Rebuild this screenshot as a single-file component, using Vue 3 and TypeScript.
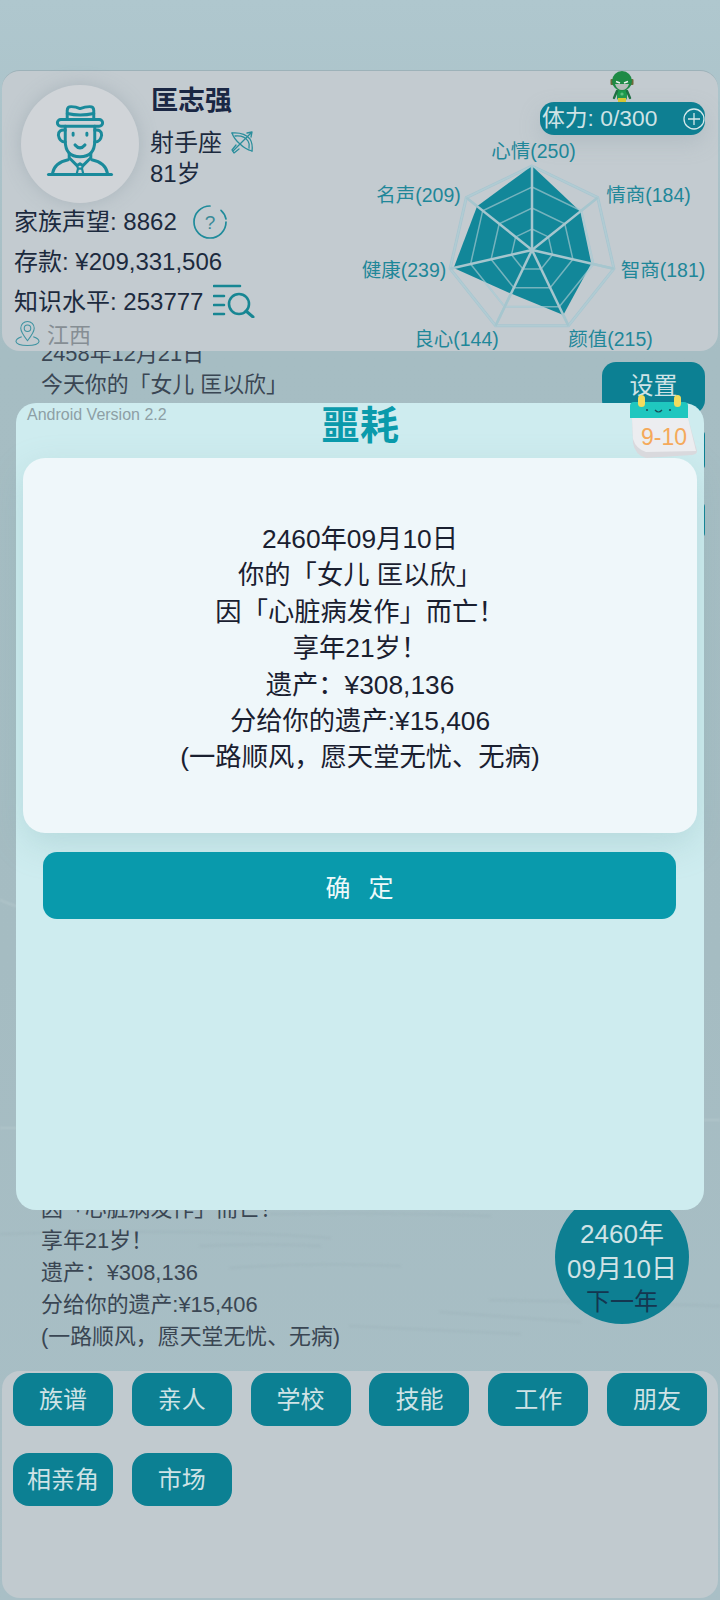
<script setup lang="ts">
import { computed } from 'vue'

const cx = 184
const cy = 179
const maxR = 84
const maxV = 250

interface Stat { name: string; value: number; x: number; y: number }

const stats: Stat[] = [
  { name: '心情', value: 250, x: 185.5, y: 79.5 },
  { name: '情商', value: 184, x: 300.5, y: 124 },
  { name: '智商', value: 181, x: 315, y: 199 },
  { name: '颜值', value: 215, x: 262.5, y: 268 },
  { name: '良心', value: 144, x: 108.5, y: 268 },
  { name: '健康', value: 239, x: 56, y: 199 },
  { name: '名声', value: 209, x: 70.5, y: 124 }
]

function pt(i: number, r: number): [number, number] {
  const a = (i * 2 * Math.PI) / stats.length
  return [cx + r * Math.sin(a), cy - r * Math.cos(a)]
}
function ring(r: number): string {
  return stats.map((_, i) => pt(i, r).map(n => n.toFixed(1)).join(',')).join(' ')
}
const rings = [84, 63, 42, 21].map(ring)
const axes = computed(() => stats.map((_, i) => pt(i, maxR)))
const dataPoints = computed(() =>
  stats.map((s, i) => pt(i, (s.value / maxV) * maxR).map(n => n.toFixed(1)).join(',')).join(' ')
)

const modalLines = [
  '2460年09月10日',
  '你的「女儿 匡以欣」',
  '因「心脏病发作」而亡\uFF01',
  '享年21岁\uFF01',
  '遗产\uFF1A¥308,136',
  '分给你的遗产:¥15,406',
  '(一路顺风\uFF0C愿天堂无忧、无病)'
]
const logTail = modalLines.slice(2)
const actions = ['族谱', '亲人', '学校', '技能', '工作', '朋友', '相亲角', '市场']
</script>

<template>
  <div class="screen">
    <svg class="texture" viewBox="0 0 720 1600" width="720" height="1600" fill="none" stroke-linecap="round">
      <g stroke="#8fa7ae" stroke-opacity="0.28" stroke-width="1.4">
        <path d="M0 1234 Q200 1228 330 1238 M200 1246 Q260 1243 320 1246 M230 1268 Q320 1262 400 1266" />
        <path d="M270 1214 Q400 1212 490 1216 M440 1312 Q520 1318 580 1322 M350 1326 Q440 1330 520 1334" />
        <path d="M490 1300 Q600 1302 720 1306" />
      </g>
      <g stroke="#dbe7ea" stroke-opacity="0.22" stroke-width="2">
        <path d="M0 1128 H16 M704 1120 H720 M0 900 Q8 904 16 906" />
      </g>
    </svg>

    <header class="profile">
      <div class="left">
        <div class="who">
          <div class="avatar">
            <svg viewBox="0 0 120 120" width="118" height="118" fill="none" stroke="#1a8a9b" stroke-width="3" stroke-linecap="round" stroke-linejoin="round">
              <path d="M47 35 V26 Q47 22 51 22 Q56 22 60 24 Q65 22 70 22 Q74 22 74 26 V35" />
              <path d="M47 29 Q60 32 74 29" />
              <rect x="37" y="35" width="46" height="7" rx="3.5" />
              <path d="M45 42 V57 Q45 73 60 73 Q75 73 75 57 V42" />
              <path d="M45 46 Q38 45 38 51 Q39 58 45 58" />
              <path d="M75 46 Q82 45 82 51 Q81 58 75 58" />
              <path d="M53 49 V51 M67 49 V51" />
              <path d="M55 61 Q60 67 65 61" stroke-width="3.2" />
              <path d="M49 70 V74 L57 82 L60 80 L63 82 L71 74 V70" />
              <path d="M48 76 Q34 79 32 90 M72 76 Q86 79 88 90" />
              <path d="M57 82 L58 85 L56.5 91 M63 82 L62 85 L63.5 91 M58 85 H62" stroke-width="2.2" />
              <path d="M28 91 H92" stroke-width="3.2" />
            </svg>
          </div>
          <div class="id">
            <div class="name">匡志强</div>
            <div class="sign">
              <span>射手座</span>
              <svg viewBox="0 0 24 24" width="24" height="24" fill="none" stroke="#2b8e9c" stroke-width="1.3" stroke-linejoin="round" stroke-linecap="round">
                <path d="M2 3 Q14 2 20 9 Q23 14 22 21" />
                <path d="M2 3 Q4 9 10 14 Q15 19 22 21" />
                <path d="M5 6 Q14 5 18 11 Q20 14 19 18" />
                <path d="M3 21 L22 2 M17 3 L22 2 L21 7" />
                <path d="M6 15 L2 20 L4 23 L9 19" />
              </svg>
            </div>
            <div class="age">81岁</div>
          </div>
        </div>
        <div class="stat-row fame">
          <span>家族声望: 8862</span>
          <svg viewBox="0 0 36 36" width="36" height="36" fill="none" stroke="#1f8b9b" stroke-width="1.7" stroke-linecap="round">
            <path d="M18 2 A16 16 0 1 0 34 18" />
            <path d="M29 6.4 A16 16 0 0 1 34 15" />
            <text x="18" y="25" text-anchor="middle" stroke="none" fill="#3b8a98" font-size="19">?</text>
          </svg>
        </div>
        <div class="stat-row">存款: ¥209,331,506</div>
        <div class="stat-row know">
          <span>知识水平: 253777</span>
          <svg viewBox="0 0 42 34" width="42" height="34" fill="none" stroke="#178693" stroke-width="2.6" stroke-linecap="round">
            <path d="M1 2 H27 M1 12 H11 M1 21 H11 M1 30 H11" />
            <circle cx="26" cy="20" r="10" />
            <path d="M33 27 L40 33" stroke-width="3" />
          </svg>
        </div>
        <div class="place">
          <svg viewBox="0 0 26 27" width="25" height="27" fill="none" stroke="#3f93a1" stroke-width="1.1">
            <path d="M13 21 Q6 12 6 8 A7 7 0 0 1 20 8 Q20 12 13 21 Z" />
            <circle cx="13" cy="8" r="3.4" />
            <path d="M7 17 Q1 19 1 22 Q2 26 13 26 Q24 26 25 22 Q25 19 19 17" />
          </svg>
          <span>江西</span>
        </div>
      </div>

      <div class="right">
        <svg class="hero" viewBox="0 0 24 32" width="24" height="32">
          <rect x="7" y="18" width="10" height="11" rx="2" fill="#1c9a4c" />
          <rect x="8" y="27" width="8" height="5" fill="#d9c92e" />
          <path d="M7 20 L4 27 M17 20 L20 27" stroke="#1e6f42" stroke-width="2.4" stroke-linecap="round" />
          <rect x="0.5" y="8" width="3" height="6" rx="1" fill="#6d6a3a" />
          <rect x="20.500" y="8" width="3" height="6" rx="1" fill="#6d6a3a" />
          <circle cx="12" cy="10" r="10" fill="#1e8a45" />
          <path d="M5 13 H19 Q17 19 12 19 Q7 19 5 13 Z" fill="#b5bdb9" />
          <path d="M6 10.500 L10 12 M18 10.500 L14 12" stroke="#ecf4ef" stroke-width="1.5" />
          <circle cx="12" cy="23" r="1.6" fill="#5ec07e" />
        </svg>
        <div class="stamina">
          <span>体力: 0/300</span>
          <svg viewBox="0 0 22 22" width="22" height="22" fill="none" stroke="#d5e8ea" stroke-width="1.3">
            <circle cx="11" cy="11" r="10" />
            <path d="M11 5 V17 M5 11 H17" />
          </svg>
        </div>
        <div class="radar">
          <svg viewBox="0 0 370 290" width="370" height="290">
            <polygon v-for="(r, i) in rings" :key="'bg' + i" :points="r" fill="none" stroke="#a9c6d0" :stroke-width="i === 0 ? 3 : 2" />
            <line v-for="(a, i) in axes" :key="'o' + i" :x1="cx" :y1="cy" :x2="a[0]" :y2="a[1]" stroke="#a9c6d0" stroke-width="2.5" />
            <polygon :points="dataPoints" fill="#128799" />
            <polygon v-for="(r, i) in rings" :key="'g' + i" :points="r" fill="none" stroke="#b8d0d6" stroke-opacity="0.6" stroke-width="1.5" />
            <line v-for="(a, i) in axes" :key="'a' + i" :x1="cx" :y1="cy" :x2="a[0]" :y2="a[1]" stroke="#a6c6ce" stroke-width="2.5" />
          </svg>
          <span v-for="s in stats" :key="s.name" class="radar-label" :style="{ left: s.x + 'px', top: s.y + 'px' }">{{ s.name }}({{ s.value }})</span>
        </div>
      </div>
    </header>

    <main class="log">
      <div class="log-block top">
        <p class="date">2458年12月21日</p>
        <p>今天你的「女儿 匡以欣」</p>
      </div>
      <div class="log-block bottom">
        <p v-for="l in logTail" :key="l">{{ l }}</p>
      </div>
      <button class="settings">设置</button>
      <span class="peek one"></span>
      <span class="peek two"></span>
      <button class="next">
        <span>2460年</span>
        <span>09月10日</span>
        <span class="next-label">下一年</span>
      </button>
    </main>

    <nav class="actions">
      <button v-for="a in actions" :key="a" class="action">{{ a }}</button>
    </nav>

    <section class="modal">
      <div class="version">Android Version 2.2</div>
      <h1 class="title">噩耗</h1>
      <div class="calendar">
        <svg class="cal-art" viewBox="0 0 68 64" width="68" height="64">
          <path d="M2 23 H58 L67 56 Q67 59 62 60 L16 63 Q5 60 3 48 Z" fill="#d9d9dd" />
          <path d="M2 23 H58 L66 56 L16 57 Q6 54 3 44 Z" fill="#ecedf0" />
          <path d="M0 11 Q0 7 4 7 H54 Q58 7 58 11 V23 H0 Z" fill="#1fc7bf" />
          <rect x="8" y="0" width="7" height="12" rx="3.5" fill="#f2dc5e" />
          <rect x="44" y="0" width="7" height="12" rx="3.5" fill="#f2dc5e" />
          <circle cx="17" cy="15" r="1.1" fill="#16505a" />
          <circle cx="40" cy="15" r="1.1" fill="#16505a" />
          <path d="M25 15 Q28.500 19 32 15" fill="none" stroke="#16505a" stroke-width="1.2" />
        </svg>
        <span class="cal-text">9-10</span>
      </div>
      <div class="modal-card">
        <p v-for="l in modalLines" :key="l">{{ l }}</p>
      </div>
      <button class="confirm">确定</button>
    </section>
  </div>
</template>

<style>
html, body { margin: 0; padding: 0; }
</style>

<style scoped>
.screen {
  position: relative;
  width: 720px;
  height: 1600px;
  overflow: hidden;
  display: flex;
  flex-direction: column;
  padding-top: 70px;
  box-sizing: border-box;
  font-family: "Liberation Sans", "Noto Sans CJK SC", sans-serif;
  color: #1c2a3e;
  background: linear-gradient(180deg, #afc7ce 0%, #a6bdc3 22%, #a5bcc2 60%, #a9bfc6 100%);
}
.texture { position: absolute; left: 0; top: 0; filter: blur(1px); }
button { font-family: inherit; border: none; padding: 0; }
p { margin: 0; }

.profile {
  position: relative;
  z-index: 2;
  height: 281px;
  margin: 0 2px;
  flex: none;
  display: flex;
  justify-content: space-between;
  background: #c3cbd0;
  border-radius: 18px;
  border-top: 1px solid #9db2b9;
  box-sizing: border-box;
  overflow: visible;
}
.left { padding: 14px 0 0 12px; width: 330px; box-sizing: border-box; }
.who { display: flex; gap: 11px; height: 119px; }
.avatar {
  width: 118px;
  height: 118px;
  margin-left: 7px;
  border-radius: 50%;
  background: #d0d4d8;
  box-shadow: 0 0 18px rgba(140, 155, 165, 0.45);
  flex: none;
}
.name { font-size: 27px; font-weight: 700; line-height: 32px; color: #1a2744; margin: 0 0 10px 1px; }
.sign { display: flex; align-items: center; gap: 8px; font-size: 24px; line-height: 32px; }
.sign svg { margin-top: -3px; }
.age { font-size: 24px; line-height: 30px; }
.stat-row { font-size: 24px; line-height: 40px; display: flex; align-items: center; height: 40px; }
.fame { gap: 15px; margin-top: -2px; }
.know { gap: 10px; }
.know svg { margin-top: -2px; }
.place { display: flex; align-items: center; gap: 7px; font-size: 22px; color: #868e94; height: 28px; margin-top: -3px; }
.place svg { margin-left: 1px; margin-top: 1px; }

.right { position: relative; width: 370px; flex: none; }
.hero { position: absolute; left: 262px; top: 0; }
.stamina {
  position: absolute;
  left: 192px;
  top: 31px;
  width: 165px;
  height: 33px;
  border-radius: 14px;
  background: #0e7f92;
  color: #cfe3e6;
  font-size: 22.8px;
  line-height: 33px;
  display: flex;
  justify-content: space-between;
  align-items: center;
  padding: 0 0 0 2px;
  box-sizing: border-box;
  box-shadow: 0 8px 20px rgba(150, 165, 175, 0.35);
}
.radar { position: relative; width: 370px; height: 281px; }
.radar svg { display: block; }
.radar-label {
  position: absolute;
  transform: translate(-50%, -50%);
  font-size: 19.5px;
  line-height: 24px;
  color: #1f8799;
  white-space: nowrap;
}

.log {
  position: relative;
  flex: 1;
  display: flex;
  flex-direction: column;
  justify-content: space-between;
  padding: 0 0 18px 41px;
  font-size: 21.9px;
  color: #3a4653;
}
.log-block p { line-height: 32px; }
.log-block.top { margin-top: -12px; }
.log-block.top .date { line-height: 30px; }

.settings {
  position: absolute;
  left: 602px;
  top: 11px;
  width: 103px;
  height: 52px;
  border-radius: 14px;
  background: #0c8093;
  color: #cfe3e6;
  font-size: 24px;
  padding-bottom: 10px;
}
.peek { position: absolute; left: 600px; width: 105px; background: #0c8093; border-radius: 0 4px 4px 0; }
.peek.one { top: 80px; height: 38px; }
.peek.two { top: 152px; height: 34px; }
.next {
  position: absolute;
  left: 555px;
  top: 839px;
  width: 134px;
  height: 134px;
  border-radius: 50%;
  background: #0d7f92;
  color: #cfe3e6;
  font-size: 26px;
  display: flex;
  flex-direction: column;
  align-items: center;
  justify-content: flex-end;
  padding-bottom: 7px;
  box-sizing: border-box;
}
.next span { line-height: 35px; }
.next .next-label { font-size: 24px; line-height: 30px; color: #143650; }

.actions {
  height: 227px;
  flex: none;
  margin: 0 2px 2px;
  padding: 2px 11px 0;
  box-sizing: border-box;
  background: #c1cacf;
  border-radius: 18px;
  display: grid;
  grid-template-columns: repeat(6, 100px);
  grid-auto-rows: 53px;
  justify-content: space-between;
  align-content: start;
  row-gap: 27px;
  position: relative;
  z-index: 2;
}
.action {
  border-radius: 16px;
  background: #0c8093;
  color: #cfe3e6;
  font-size: 24px;
  padding-bottom: 4px;
}

.modal {
  position: absolute;
  z-index: 5;
  left: 16px;
  top: 403px;
  width: 688px;
  height: 807px;
  border-radius: 20px;
  background: #ceecef;
  box-sizing: border-box;
  padding-top: 55px;
}
.version { position: absolute; left: 11px; top: 4px; font-size: 16px; line-height: 16px; color: #8d9fa5; }
.title {
  position: absolute;
  left: 0;
  right: 0;
  top: 1px;
  margin: 0;
  text-align: center;
  font-size: 39px;
  line-height: 44px;
  font-weight: 700;
  color: #0a9aab;
}
.calendar { position: absolute; left: 614px; top: -8px; width: 68px; height: 64px; }
.cal-art { position: absolute; left: 0; top: 0; }
.cal-text {
  position: absolute;
  left: 0;
  right: 0;
  top: 28px;
  text-align: center;
  font-size: 23px;
  line-height: 28px;
  color: #f5a95a;
}
.modal-card {
  margin: 0 7px;
  height: 375px;
  padding-top: 63px;
  box-sizing: border-box;
  background: #eff7fa;
  border-radius: 22px;
  box-shadow: 0 12px 34px rgba(130, 175, 180, 0.3);
  text-align: center;
  font-size: 26.3px;
  line-height: 36.4px;
  color: #1a2030;
}
.confirm {
  display: block;
  width: 633px;
  height: 67px;
  margin: 19px 0 0 27px;
  border-radius: 14px;
  background: #099aac;
  color: #eef9fa;
  font-size: 25px;
  letter-spacing: 18px;
  text-indent: 18px;
}
</style>
